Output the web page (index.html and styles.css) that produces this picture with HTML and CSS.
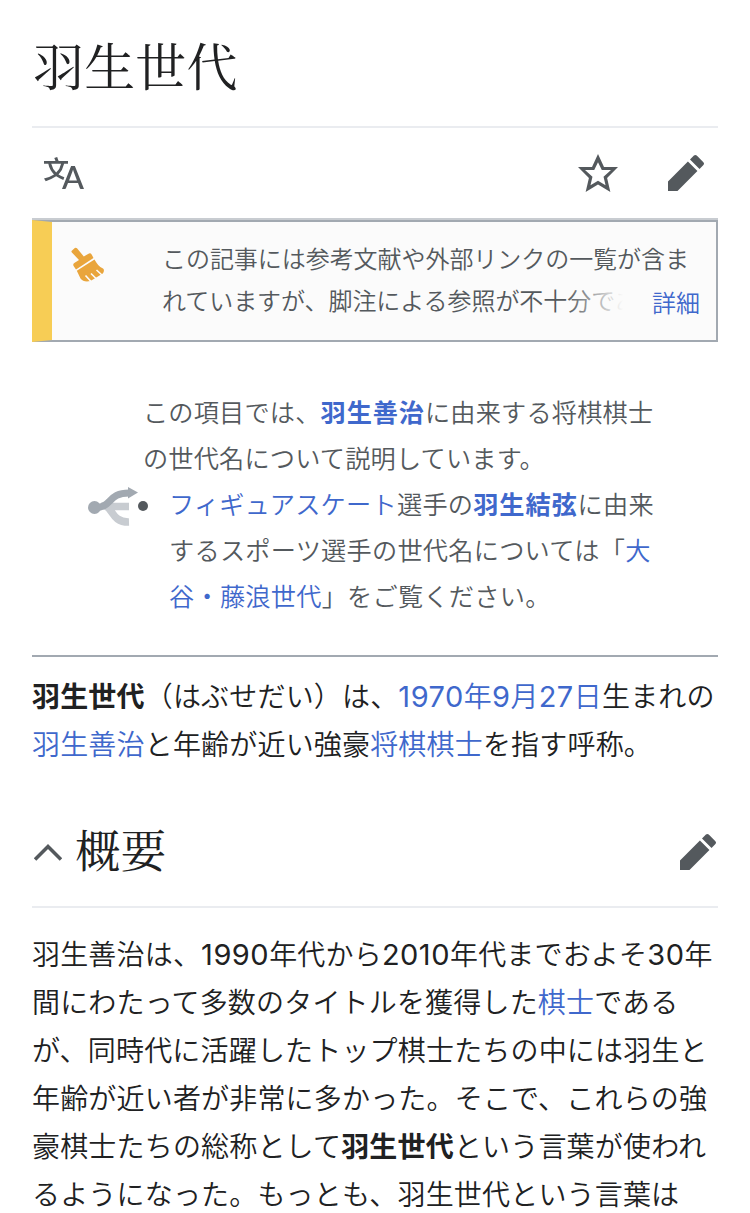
FILE: index.html
```
<!DOCTYPE html>
<html lang="ja">
<head>
<meta charset="UTF-8">
<title>羽生世代</title>
<link rel="stylesheet" href="styles.css">
</head>
<body>
<div class="page">
    <h1>羽生世代</h1>
    <div class="toolbar">
        <svg class="icon" viewBox="0 0 20 20"><path d="M20 18h-1.44a.6.6 0 0 1-.4-.12.8.8 0 0 1-.23-.31L17 15h-5l-1 2.54a.8.8 0 0 1-.22.3.6.6 0 0 1-.4.14H9l4.55-11.47h1.89zm-3.53-4.31L14.89 9.5a12 12 0 0 1-.39-1.24q-.09.37-.19.69l-.19.56-1.58 4.19zm-6.3-1.58a13.4 13.4 0 0 1-2.91-1.41 11.46 11.46 0 0 0 2.81-5.37H12V4H7.31a4 4 0 0 0-.2-.56C6.87 2.79 6.6 2 6.6 2l-1.47.5s.4.89.6 1.5H0v1.33h2.15A11.23 11.23 0 0 0 5 10.7a17.2 17.2 0 0 1-5 2.1q.56.82.87 1.38a23.3 23.3 0 0 0 5.22-2.51 15.6 15.6 0 0 0 3.56 1.77zM3.63 5.33h4.91a8.1 8.1 0 0 1-2.45 4.45 9.1 9.1 0 0 1-2.46-4.45"/></svg>
        <div class="actions">
            <svg class="icon" viewBox="0 0 20 20"><path fill-rule="evenodd" d="M20 7h-7L10 .5 7 7H0l5.46 5.47-1.64 7 6.18-3.7 6.18 3.73-1.63-7zm-10 6.9-3.76 2.27 1-4.28L3.5 8.5h4.61L10 4.6l1.9 3.9h4.6l-3.73 3.4 1 4.28z"/></svg>
            <svg class="icon" viewBox="0 0 20 20"><path d="m16.77 8 1.94-2a1 1 0 0 0 0-1.41l-3.34-3.3a1 1 0 0 0-1.41 0L12 3.23zM1 14.25V19h4.75l9.96-9.96-4.75-4.75z"/></svg>
        </div>
    </div>
    <div class="notice">
        <svg class="broom" viewBox="0 0 34 35">
            <path d="M.8 3.800 3.800 1q1.200-.8 2.200.3L12.800 9.500 17.500 6.700q2-1 3.300 1L22.500 11 5 22.500 2.600 19q-1-1.800.7-3L8 13 .900 5.500Q0 4.500.8 3.800z"/>
            <path d="M5.800 23.800 23.500 12.500C26 17 28 19.500 32 21.500Q34 23 31.800 26.500L19.500 34Q12.500 35.500 9.500 31.500z"/>
            <path class="slit" d="M25.500 23 31.500 28.500M20 26.500 26 32.500M14.500 28.500 20.500 35"/>
        </svg>
        <div class="notice-text">
            この記事には参考文献や外部リンクの一覧が含ま<br>
            れていますが、脚注による参照が不十分であ
            <a class="more" href="#">詳細</a>
        </div>
    </div>
    <div class="hatnote">
        <svg class="branch" viewBox="0 0 50 40">
            <path d="M14 19C25 17 22 35.500 41 35M20 19.500H41" fill="none" stroke="#c8ccd1" stroke-width="7.500"/>
            <path d="M6 20.500C25 21 19 6 41 6" fill="none" stroke="#a2a9b1" stroke-width="7"/>
            <circle cx="6.500" cy="20.500" r="6.500" fill="#a2a9b1"/>
            <path d="M40 0 50 5.500 40 11.500z" fill="#a2a9b1"/>
        </svg>
        <div class="hatnote-text">
            この項目では、<a href="#"><b>羽生善治</b></a>に由来する将棋棋士<br>
            の世代名について説明しています。
            <ul>
                <li><a href="#">フィギュアスケート</a>選手の<a href="#"><b>羽生結弦</b></a>に由来<br>
                するスポーツ選手の世代名については「<a href="#">大<br>
                谷・藤浪世代</a>」をご覧ください。</li>
            </ul>
        </div>
    </div>
    <p class="lead"><b>羽生世代</b>（はぶせだい）は、<a href="#"><span class="num">1970</span>年<span class="num">9</span>月<span class="num">27</span>日</a>生まれの<br>
    <a href="#">羽生善治</a>と年齢が近い強豪<a href="#">将棋棋士</a>を指す呼称。</p>
    <div class="section-heading">
        <svg class="chevron" viewBox="0 0 28 18"><path d="M1 16.500 14 3.500 27 16.500"/></svg>
        <h2>概要</h2>
        <svg class="icon" viewBox="0 0 20 20"><path d="m16.77 8 1.94-2a1 1 0 0 0 0-1.41l-3.34-3.3a1 1 0 0 0-1.41 0L12 3.23zM1 14.25V19h4.75l9.96-9.96-4.75-4.75z"/></svg>
    </div>
    <p>羽生善治は、<span class="num">1990</span>年代から<span class="num">2010</span>年代までおよそ<span class="num">30</span>年<br>
    間にわたって多数のタイトルを獲得した<a href="#">棋士</a>である<br>
    が、同時代に活躍したトップ棋士たちの中には羽生と<br>
    年齢が近い者が非常に多かった。そこで、これらの強<br>
    豪棋士たちの総称として<b>羽生世代</b>という言葉が使われ<br>
    るようになった。もっとも、羽生世代という言葉は</p>
</div>
</body>
</html>
```
FILE: styles.css
```
body {
    margin: 0;
    background-color: #fff;
    color: #202122;
    font-family: Inter, "Noto Sans CJK JP", sans-serif;
    font-size: 28px;
    font-weight: 350;
    line-height: 48px;
    letter-spacing: 0.18px;
    white-space: nowrap;
}
.page {
    height: 1213px;
    padding: 0 32px;
    box-sizing: border-box;
    overflow: hidden;
}
a {
    color: #3f68cc;
    text-decoration: none;
}
b {
    font-weight: 700;
}
p {
    margin: 0;
}
.num {
    font-weight: 400;
    font-size: 29px;
    line-height: 1;
    letter-spacing: 0.5px;
}
h1, h2 {
    margin: 0;
    font-family: "Noto Serif CJK JP", "Noto Sans CJK JP", serif;
    font-weight: 400;
}
h1 {
    height: 126px;
    border-bottom: 2px solid #eaecf0;
    font-size: 51px;
    line-height: 128px;
    text-indent: 1px;
}
.icon {
    width: 40px;
    height: 40px;
    fill: #54595d;
}
.toolbar {
    display: flex;
    align-items: center;
    justify-content: space-between;
    height: 90px;
    padding: 0 12px;
    border-bottom: 2px solid #c8ccd1;
}
.actions {
    display: flex;
    gap: 48px;
}
.notice {
    display: flex;
    height: 118px;
    border: 2px solid #a2a9b1;
    border-left: 20px solid #f7cd55;
    background-color: #fbfbfb;
}
.broom {
    width: 34px;
    height: 35px;
    margin: 25px 57px 0 19px;
    fill: #e9a53c;
}
.slit {
    fill: none;
    stroke: #fbfbfb;
    stroke-width: 1.6;
}
.notice-text {
    position: relative;
    width: 537px;
    padding-top: 17px;
    color: #54595d;
    font-size: 24px;
    line-height: 42px;
    letter-spacing: -0.05px;
}
.more {
    position: absolute;
    right: 0;
    bottom: 15px;
    width: 47px;
    padding-left: 86px;
    background: linear-gradient(to right, rgba(251,251,251,0), #fbfbfb 43%);
}
.hatnote {
    display: flex;
    padding: 48px 0 35px 56px;
    border-bottom: 2px solid #a2a9b1;
    color: #54595d;
    font-size: 25.2px;
    line-height: 46px;
}
.branch {
    width: 50px;
    height: 40px;
    margin: 97px 5px 0 0;
}
.hatnote b {
    letter-spacing: 0.9px;
}
.hatnote ul {
    margin: 0;
    padding-left: 26px;
    list-style: none;
    letter-spacing: 0.25px;
}
.hatnote li::before {
    content: "";
    float: left;
    width: 10px;
    height: 10px;
    margin: 19px 0 0 -31px;
    border-radius: 50%;
    background-color: #54595d;
}
.lead {
    padding-top: 16px;
}
.section-heading {
    display: flex;
    align-items: center;
    height: 112px;
    margin: 25px 0 23px;
    padding-left: 2px;
    border-bottom: 2px solid #eaecf0;
}
.section-heading .icon {
    margin: 4px 0 0 auto;
}
.chevron {
    width: 28px;
    height: 18px;
    margin: 3px 13px 0 0;
    fill: none;
    stroke: #54595d;
    stroke-width: 3.6;
}
h2 {
    margin-top: -3px;
    font-size: 45.5px;
}
```
